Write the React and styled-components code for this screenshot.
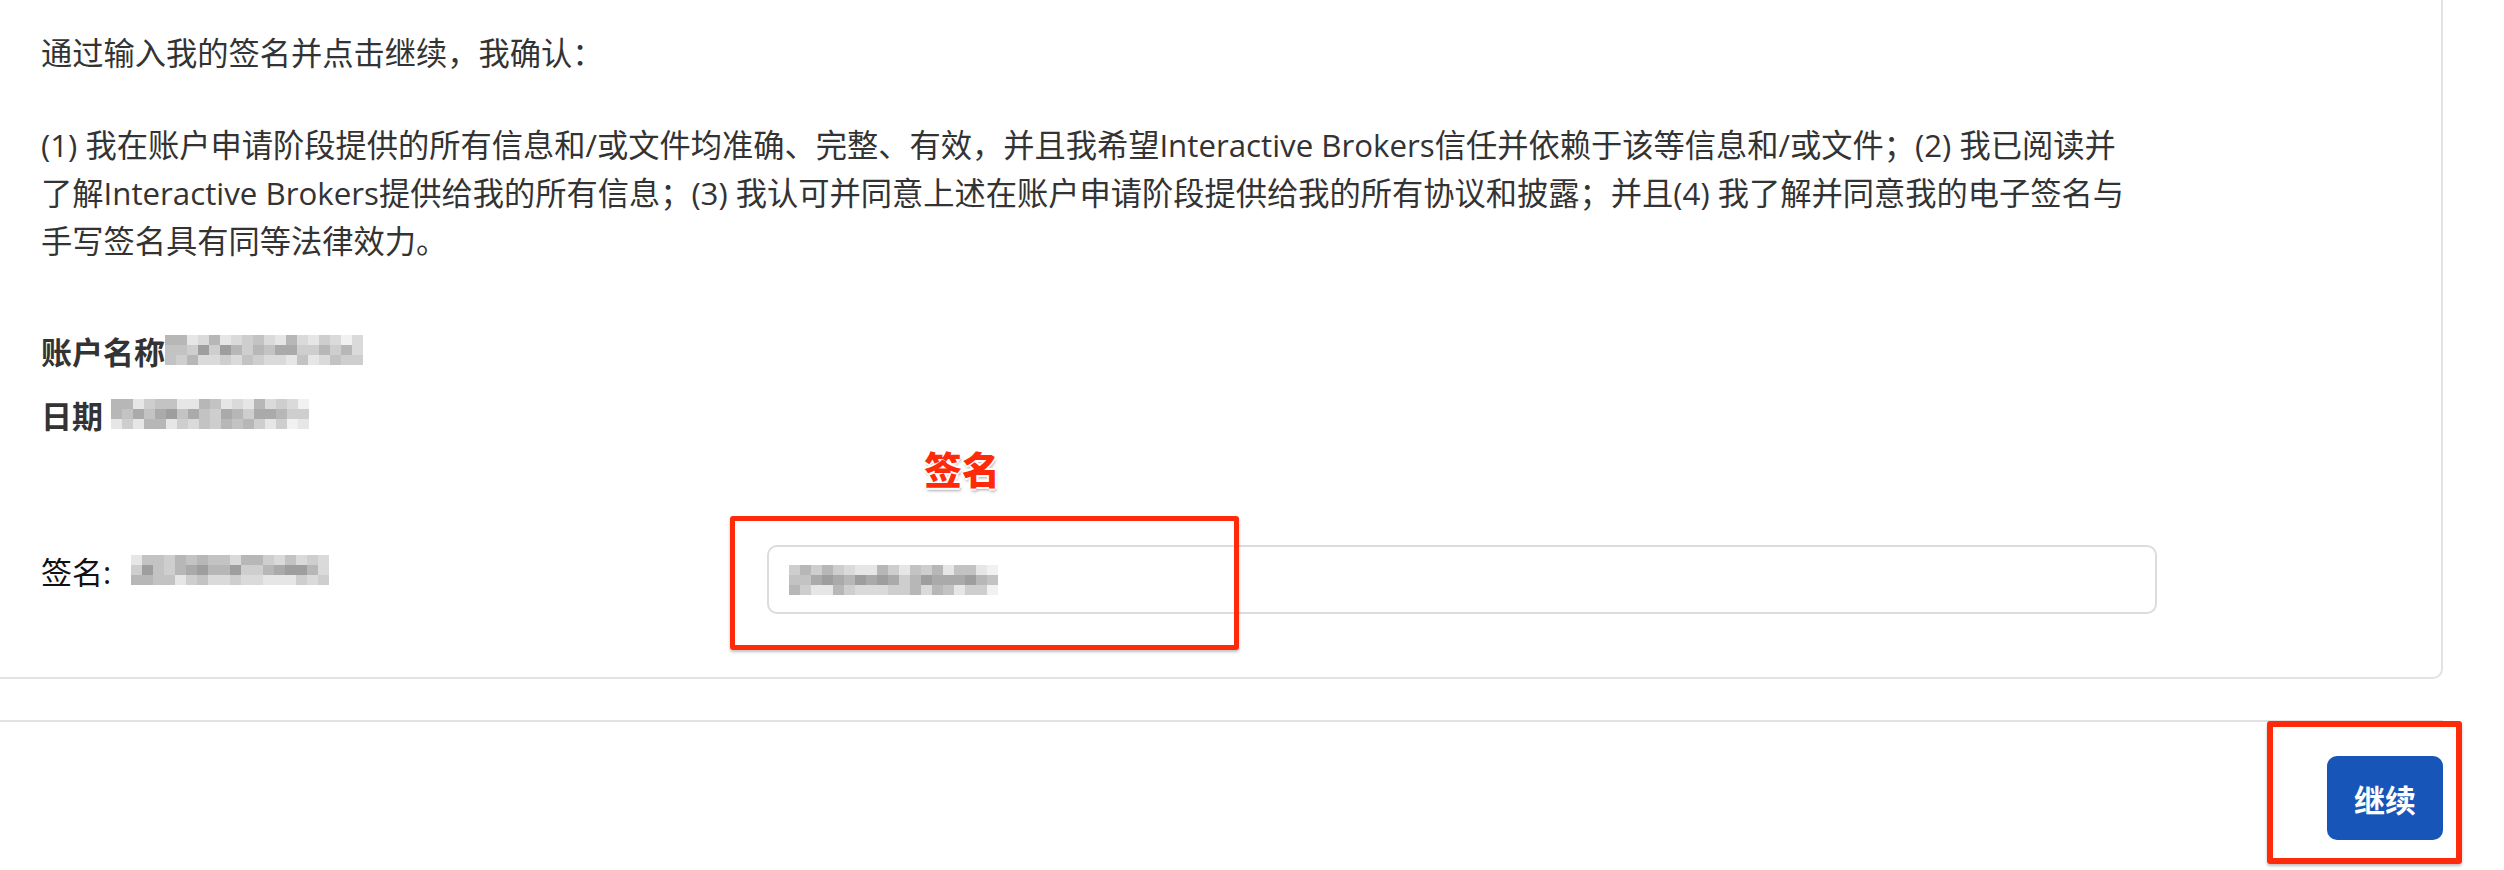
import React from 'react'
import styled, { createGlobalStyle } from 'styled-components'

const GlobalStyle = createGlobalStyle`
  html, body {
    margin: 0;
    padding: 0;
    background: #fff;
  }
  body {
    font-family: 'Open Sans', 'Noto Sans CJK SC', sans-serif;
    color: #333;
  }
`

const SHADES = ['#f1f1f1', '#e6e6e6', '#dadada', '#cecece', '#c3c3c3', '#b7b7b7', '#aaaaaa', '#9e9e9e']

// cheap seeded generator so the pixelated blocks stay the same between renders
const seeded = (seed) => () => {
  seed = (seed * 9301 + 49297) % 233280
  return seed / 233280
}

const Mosaic = ({ seed, cols = 18, rows = 3 }) => {
  const next = seeded(seed)
  const cells = []
  for (let r = 0; r < rows; r++) {
    for (let c = 0; c < cols; c++) {
      const bias = r === 1 ? 3 : 1
      const fade = c > cols - 3 ? -2 : 0
      const idx = Math.max(0, Math.min(SHADES.length - 1, Math.floor(next() * 5) + bias + fade))
      cells.push(<Cell key={`${r}-${c}`} $shade={SHADES[idx]} />)
    }
  }
  return <MosaicGrid $cols={cols}>{cells}</MosaicGrid>
}

export default function App () {
  return (
    <Page>
      <GlobalStyle />
      <Card>
        <Content>
          <Para>通过输入我的签名并点击继续，我确认：</Para>
          <Para $spaced>
            (1) 我在账户申请阶段提供的所有信息和/或文件均准确、完整、有效，并且我希望Interactive Brokers信任并依赖于该等信息和/或文件；(2) 我已阅读并<br />
            了解Interactive Brokers提供给我的所有信息；(3) 我认可并同意上述在账户申请阶段提供给我的所有协议和披露；并且(4) 我了解并同意我的电子签名与<br />
            手写签名具有同等法律效力。
          </Para>

          <InfoList>
            <InfoRow>
              <InfoLabel>账户名称</InfoLabel>
              <Mosaic seed={17} cols={18} />
            </InfoRow>
            <InfoRow>
              <InfoLabel>日期</InfoLabel>
              <Spacer />
              <Mosaic seed={41} cols={18} />
            </InfoRow>
          </InfoList>

          <SignRow>
            <SignLabel>
              签名:
              <Mosaic seed={73} cols={18} />
            </SignLabel>
            <SignField role='textbox'>
              <Mosaic seed={5} cols={19} />
            </SignField>
          </SignRow>
        </Content>
      </Card>

      <Footer>
        <ContinueButton type='button'>继续</ContinueButton>
      </Footer>

      <CalloutTitle>签名</CalloutTitle>
      <CalloutBox $left={730} $top={516} $width={509} $height={134} $stroke={5} />
      <CalloutBox $left={2267} $top={721} $width={195} $height={143} $stroke={6} />
    </Page>
  )
}

const Page = styled.div`
  position: relative;
  width: 2504px;
  height: 870px;
  overflow: hidden;
`

const Card = styled.section`
  box-sizing: border-box;
  width: 2443px;
  padding: 29px 0 63px 41px;
  border-right: 2px solid #e2e2e2;
  border-bottom: 2px solid #e2e2e2;
  border-bottom-right-radius: 10px;
`

const Content = styled.div`
  width: 2116px;
`

const Para = styled.p`
  margin: ${(p) => (p.$spaced ? '44px' : '0')} 0 0;
  font-size: 31.25px;
  line-height: 48px;
  color: #333;
  white-space: nowrap;
`

const InfoList = styled.div`
  display: flex;
  flex-direction: column;
  gap: 16px;
  margin-top: 61px;
`

const InfoRow = styled.div`
  display: flex;
  align-items: center;
  height: 48px;
`

const InfoLabel = styled.span`
  font-size: 31px;
  font-weight: 700;
  color: #333;
`

const Spacer = styled.span`
  width: 8px;
`

const MosaicGrid = styled.span`
  display: inline-grid;
  grid-template-columns: repeat(${(p) => p.$cols}, 11px);
  grid-auto-rows: 10px;
  vertical-align: middle;
  filter: blur(0.6px);
`

const Cell = styled.i`
  display: block;
  background: ${(p) => p.$shade};
`

const SignRow = styled.div`
  display: grid;
  grid-template-columns: 726px 1fr;
  align-items: start;
  margin-top: 107px;
`

const SignLabel = styled.div`
  display: flex;
  align-items: center;
  gap: 20px;
  height: 48px;
  margin-top: 1px;
  font-size: 31px;
  color: #111;
`

const SignField = styled.div`
  box-sizing: border-box;
  display: flex;
  align-items: center;
  height: 69px;
  padding: 0 20px;
  border: 2px solid #dcdcdc;
  border-radius: 10px;
  background: #fff;
`

const Footer = styled.footer`
  box-sizing: border-box;
  display: flex;
  justify-content: flex-end;
  width: 2443px;
  margin-top: 41px;
  padding-top: 34px;
  border-top: 2px solid #e2e2e2;
`

const ContinueButton = styled.button`
  height: 84px;
  padding: 0 27px;
  border: none;
  border-radius: 10px;
  background: #1756b8;
  color: #fff;
  font-family: 'Open Sans', 'Noto Sans CJK SC', sans-serif;
  font-size: 31px;
  font-weight: 600;
  cursor: pointer;
`

const CalloutTitle = styled.div`
  position: absolute;
  left: 924px;
  top: 449px;
  font-family: 'Noto Sans CJK SC', sans-serif;
  font-size: 38px;
  line-height: 1;
  font-weight: 900;
  color: #ff2a0a;
  text-shadow:
    -2px 0 0 #fff, 2px 0 0 #fff, 0 -2px 0 #fff, 0 2px 0 #fff,
    1px 3px 3px rgba(0, 0, 0, 0.35);
`

const CalloutBox = styled.div`
  position: absolute;
  box-sizing: border-box;
  left: ${(p) => p.$left}px;
  top: ${(p) => p.$top}px;
  width: ${(p) => p.$width}px;
  height: ${(p) => p.$height}px;
  border: ${(p) => p.$stroke}px solid #ff2a0a;
  border-radius: 3px;
  box-shadow: 0 2px 3px rgba(0, 0, 0, 0.25);
`
